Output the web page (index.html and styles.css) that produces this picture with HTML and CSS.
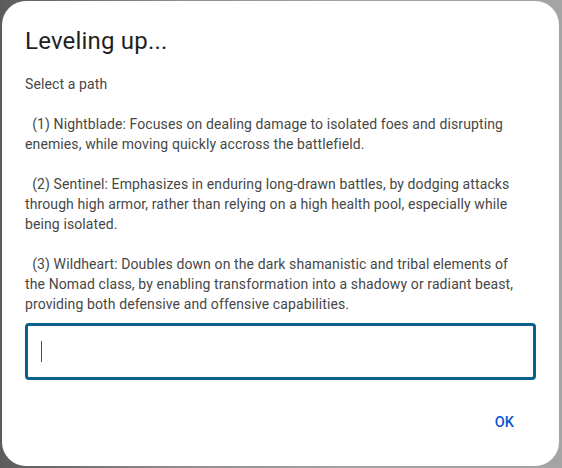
FILE: index.html
```html
<!DOCTYPE html>
<html lang="en">
<head>
<meta charset="utf-8">
<title>Leveling up...</title>
<link rel="stylesheet" href="styles.css">
</head>
<body>
<div class="dialog">
  <h1 class="title">Leveling up...</h1>
  <p class="message">Select a path

  (1) Nightblade: Focuses on dealing damage to isolated foes and disrupting enemies, while moving quickly accross the battlefield.

  (2) Sentinel: Emphasizes in enduring long-drawn battles, by dodging attacks through high armor, rather than relying on a high health pool, especially while being isolated.

  (3) Wildheart: Doubles down on the dark shamanistic and tribal elements of the Nomad class, by enabling transformation into a shadowy or radiant beast, providing both defensive and offensive capabilities.</p>
  <div class="field"><span class="caret"></span></div>
  <div class="actions"><button class="ok">OK</button></div>
</div>
</body>
</html>
```
FILE: styles.css
```css
html, body {
  margin: 0;
  height: 100%;
}
body {
  background: linear-gradient(90deg, #5c5c5c 0, #8f8a8a 30%, #a2a2a2 60%, #a4a4a4 100%);
  padding: 1px 3px 2px 2px;
  box-sizing: border-box;
  font-family: Roboto, "Noto Sans", sans-serif;
}
.dialog {
  height: 100%;
  box-sizing: border-box;
  background: #fff;
  border-radius: 24px;
  padding: 26px 23px 0 23px;
  display: flex;
  flex-direction: column;
}
.title {
  margin: 0;
  font-size: 24px;
  line-height: 28px;
  font-weight: 400;
  color: #1f1f1f;
  letter-spacing: 0.2px;
}
.message {
  margin: 19px 0 0 0;
  font-size: 14px;
  line-height: 20px;
  color: #474747;
  white-space: pre-wrap;
  width: 500px;
  letter-spacing: 0.11px;
}
.field {
  margin-top: 9px;
  width: 511px;
  height: 57px;
  box-sizing: border-box;
  border: 3px solid #0e5f8e;
  border-radius: 4px;
  display: flex;
  align-items: center;
  padding-left: 13px;
}
.caret {
  width: 1px;
  height: 21px;
  background: #1a5a8a;
}
.actions {
  display: flex;
  justify-content: flex-end;
  width: 511px;
  margin-top: 22px;
}
.ok {
  border: none;
  background: transparent;
  font-family: Roboto, "Noto Sans", sans-serif;
  font-size: 14.5px;
  font-weight: 500;
  color: #0b57d0;
  height: 40px;
  padding: 0 22px 0 12px;
}
```
